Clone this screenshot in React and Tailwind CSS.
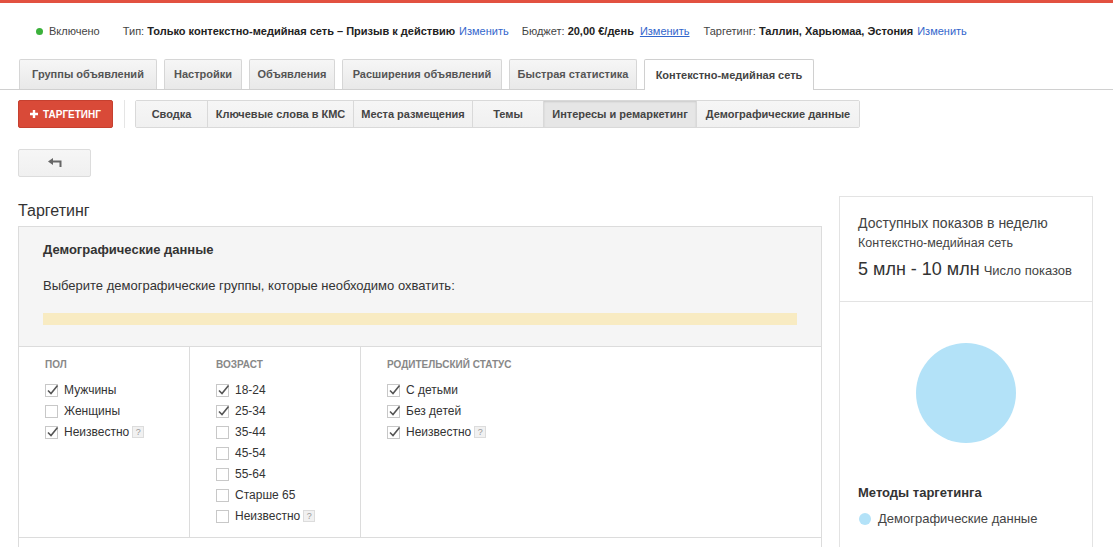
import React from "react";

const tabs = [
  { label: "Группы объявлений", w: "w-[138px]" },
  { label: "Настройки", w: "w-[78px]" },
  { label: "Объявления", w: "w-[86px]" },
  { label: "Расширения объявлений", w: "w-[160px]" },
  { label: "Быстрая статистика", w: "w-[128px]" },
];

const segments = [
  { label: "Сводка", w: "w-[71px]" },
  { label: "Ключевые слова в КМС", w: "w-[146px]" },
  { label: "Места размещения", w: "w-[119px]" },
  { label: "Темы", w: "w-[71px]" },
  { label: "Интересы и ремаркетинг", w: "w-[153px]", active: true },
  { label: "Демографические данные", w: "w-[163px]" },
];

const columns = [
  {
    title: "Пол",
    w: "w-[171px] border-r",
    items: [
      { label: "Мужчины", on: true },
      { label: "Женщины", on: false },
      { label: "Неизвестно", on: true, help: true },
    ],
  },
  {
    title: "Возраст",
    w: "w-[171px] border-r",
    items: [
      { label: "18-24", on: true },
      { label: "25-34", on: true },
      { label: "35-44", on: false },
      { label: "45-54", on: false },
      { label: "55-64", on: false },
      { label: "Старше 65", on: false },
      { label: "Неизвестно", on: false, help: true },
    ],
  },
  {
    title: "Родительский статус",
    w: "flex-1",
    items: [
      { label: "С детьми", on: true },
      { label: "Без детей", on: true },
      { label: "Неизвестно", on: true, help: true },
    ],
  },
];

const Checkbox = ({ on }) => (
  <span className="relative flex h-[13px] w-[13px] shrink-0 items-center justify-center border border-[#c8c8c8] bg-white">
    {on && (
      <svg width="13" height="12" viewBox="0 0 13 12" className="absolute -top-[1px] left-0">
        <path d="M2 6.5 L5 9.5 L11.5 1.5" fill="none" stroke="#555" strokeWidth="1.6" />
      </svg>
    )}
  </span>
);

const Help = () => (
  <span className="ml-[3px] flex h-[12px] w-[12px] items-center justify-center border border-[#dcdcdc] bg-[#f1f1f1] text-[9px] leading-none text-[#999]">
    ?
  </span>
);

export default function App() {
  return (
    <div className="min-h-[547px] w-[1113px] bg-white font-['Liberation_Sans',Arial,sans-serif] text-[#222]">
      <div className="h-[3px] bg-[#e25140]" />

      {/* status line */}
      <div className="flex h-[56px] items-center pl-[36px] text-[11px] text-[#444]">
        <span className="h-[7px] w-[7px] rounded-full bg-[#3bb13b]" />
        <span className="ml-[6px]">Включено</span>
        <span className="ml-[23px]">
          Тип: <b className="text-[#222]">Только контекстно-медийная сеть – Призыв к действию</b>
        </span>
        <span className="ml-[4px] text-[#3366cc]">Изменить</span>
        <span className="ml-[13px]">
          Бюджет: <b className="text-[#222]">20,00 €/день</b>
        </span>
        <span className="ml-[6px] text-[#3366cc] underline">Изменить</span>
        <span className="ml-[14px]">
          Таргетинг: <b className="text-[#222]">Таллин, Харьюмаа, Эстония</b>
        </span>
        <span className="ml-[4px] text-[#3366cc]">Изменить</span>
      </div>

      {/* tabs */}
      <div className="flex h-[31px] items-end gap-[7px] border-b border-[#d0d0d0] pl-[19px]">
        {tabs.map((t) => (
          <div
            key={t.label}
            className={`${t.w} flex h-[30px] items-center justify-center rounded-t-[2px] border border-b-0 border-[#d6d6d6] bg-gradient-to-b from-[#f6f6f6] to-[#e9e9e9] text-[11px] font-bold text-[#555]`}
          >
            {t.label}
          </div>
        ))}
        <div className="-mb-px flex h-[31px] w-[170px] items-center justify-center rounded-t-[2px] border border-b-0 border-[#d0d0d0] bg-white text-[11px] font-bold text-[#444]">
          Контекстно-медийная сеть
        </div>
      </div>

      {/* toolbar */}
      <div className="mt-[10px] flex items-center pl-[18px]">
        <div className="flex h-[28px] w-[95px] items-center justify-center gap-[5px] rounded-[2px] border border-[#c6402f] bg-[#d94a38] text-[10px] font-bold text-white">
          <svg width="8" height="8" viewBox="0 0 8 8">
            <path d="M4 0 V8 M0 4 H8" stroke="white" strokeWidth="2.4" />
          </svg>
          ТАРГЕТИНГ
        </div>
        <div className="ml-[11px] h-[28px] w-px bg-[#e5e5e5]" />
        <div className="ml-[10px] flex h-[28px] rounded-[2px] border border-[#d9d9d9]">
          {segments.map((s, i) => (
            <div
              key={s.label}
              className={`${s.w} flex items-center justify-center text-[11px] font-bold text-[#444] ${
                i > 0 ? "border-l border-[#d9d9d9]" : ""
              } ${
                s.active
                  ? "bg-[#e6e6e6] shadow-[inset_0_1px_2px_rgba(0,0,0,0.12)] text-[#333]"
                  : "bg-gradient-to-b from-[#f6f6f6] to-[#f0f0f0]"
              }`}
            >
              {s.label}
            </div>
          ))}
        </div>
      </div>

      {/* back */}
      <div className="mt-[21px] pl-[18px]">
        <div className="flex h-[28px] w-[73px] items-center justify-center rounded-[2px] border border-[#dcdcdc] bg-gradient-to-b from-[#f6f6f6] to-[#f0f0f0]">
          <svg width="14" height="10" viewBox="0 0 14 10">
            <path d="M0 3.5 L5 0 V7 Z" fill="#666" />
            <path d="M4 3.5 H12.5 V9" fill="none" stroke="#666" strokeWidth="2" />
          </svg>
        </div>
      </div>

      {/* main */}
      <div className="mt-[19px] flex gap-[17px] pl-[18px]">
        <div className="w-[804px]">
          <div className="flex h-[30px] items-center text-[16px] text-[#333]">Таргетинг</div>
          <div className="border border-[#dcdcdc]">
            <div className="h-[120px] border-b border-[#dcdcdc] bg-[#f5f5f5] px-[24px]">
              <div className="pt-[15px] text-[13px] font-bold leading-[16px] text-[#333]">Демографические данные</div>
              <div className="mt-[20px] text-[13px] leading-[16px] text-[#333]">
                Выберите демографические группы, которые необходимо охватить:
              </div>
              <div className="mt-[19px] h-[12px] bg-[#f8ebc2]" />
            </div>
            <div className="flex h-[191px] border-b border-[#dcdcdc]">
              {columns.map((c) => (
                <div key={c.title} className={`${c.w} border-[#dcdcdc] pl-[26px]`}>
                  <div className="pt-[11px] text-[10px] font-bold uppercase leading-[13px] text-[#888]">{c.title}</div>
                  <div className="mt-[11px] flex flex-col gap-[5px]">
                    {c.items.map((it) => (
                      <div key={it.label} className="flex h-[16px] items-center text-[12px] text-[#333]">
                        <Checkbox on={it.on} />
                        <span className="ml-[6px]">{it.label}</span>
                        {it.help && <Help />}
                      </div>
                    ))}
                  </div>
                </div>
              ))}
            </div>
            <div className="h-[30px]" />
          </div>
        </div>

        <div className="w-[254px] border border-[#e3e3e3]">
          <div className="h-[105px] border-b border-[#e3e3e3] pl-[18px]">
            <div className="pt-[17px] text-[14px] leading-[18px] text-[#444]">Доступных показов в неделю</div>
            <div className="mt-[3px] text-[12.5px] leading-[16px] text-[#444]">Контекстно-медийная сеть</div>
            <div className="mt-[7px] flex items-baseline">
              <span className="text-[18px] leading-[22px] text-[#333]">5 млн - 10 млн</span>
              <span className="ml-[4px] text-[13px] text-[#444]">Число показов</span>
            </div>
          </div>
          <div className="flex justify-center pt-[41px]">
            <div className="h-[100px] w-[100px] rounded-full bg-[#b3e2f8]" />
          </div>
          <div className="mt-[42px] pl-[18px] text-[13px] font-bold leading-[16px] text-[#333]">Методы таргетинга</div>
          <div className="mt-[8px] flex items-center pl-[19px]">
            <span className="h-[12px] w-[12px] rounded-full bg-[#b3e2f8]" />
            <span className="ml-[7px] text-[13px] text-[#444]">Демографические данные</span>
          </div>
          <div className="h-[40px]" />
        </div>
      </div>
    </div>
  );
}
